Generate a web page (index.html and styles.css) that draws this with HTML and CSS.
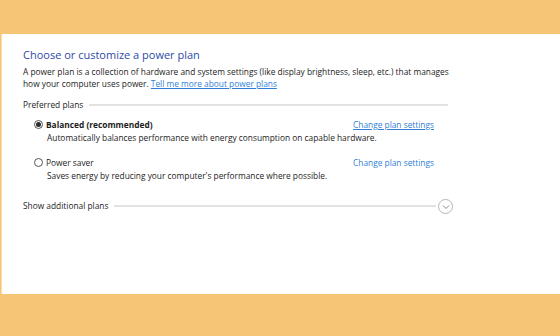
FILE: index.html
```html
<!DOCTYPE html>
<html>
<head>
<meta charset="utf-8">
<link rel="stylesheet" href="styles.css">
</head>
<body>
<div class="panel">
  <h1 class="title">Choose or customize a power plan</h1>
  <p class="intro">A power plan is a collection of hardware and system settings (like display brightness, sleep, etc.) that manages<br>how your computer uses power. <a class="link" href="#">Tell me more about power plans</a></p>

  <div class="group-head">
    <span class="group-label">Preferred plans</span>
    <span class="rule"></span>
  </div>

  <div class="plan first">
    <div class="plan-row">
      <span class="radio checked"></span>
      <span class="plan-name bold">Balanced (recommended)</span>
      <a class="link plan-link" href="#">Change plan settings</a>
    </div>
    <div class="plan-desc">Automatically balances performance with energy consumption on capable hardware.</div>
  </div>

  <div class="plan second">
    <div class="plan-row">
      <span class="radio"></span>
      <span class="plan-name">Power saver</span>
      <a class="link plan-link plain" href="#">Change plan settings</a>
    </div>
    <div class="plan-desc">Saves energy by reducing your computer's performance where possible.</div>
  </div>

  <div class="group-head more">
    <span class="group-label">Show additional plans</span>
    <span class="rule"></span>
    <span class="expander">
      <svg width="8" height="6" viewBox="0 0 8 6"><path d="M1 1.5 L4 4.5 L7 1.5" fill="none" stroke="#8a8a8a" stroke-width="1"/></svg>
    </span>
  </div>
</div>
</body>
</html>
```

FILE: styles.css
```css
html, body {
  margin: 0;
  padding: 0;
}
body {
  background: #f7c576;
  width: 560px;
  height: 336px;
  overflow: hidden;
  font-family: "Open Sans", "Noto Sans", sans-serif;
}
.panel {
  margin-top: 34px;
  margin-left: 1px;
  border-left: 1px solid #fcdcaa;
  height: 260px;
  background: #ffffff;
  padding: 13px 0 0 21px;
  box-sizing: border-box;
}
.title {
  margin: 0;
  font-size: 11px;
  line-height: 16px;
  font-weight: normal;
  color: #2e4aa8;
}
.intro {
  margin: 3px 0 0 0;
  font-size: 8.35px;
  line-height: 11.5px;
  color: #1c1c1c;
}
.link {
  color: #2f7fd6;
  text-decoration: underline;
}
.group-head {
  display: flex;
  align-items: center;
  width: 425px;
  margin-top: 10px;
  height: 12px;
}
.group-label {
  font-size: 8.35px;
  line-height: 12px;
  color: #1c1c1c;
  margin-right: 6px;
  white-space: nowrap;
}
.rule {
  flex: 1;
  height: 1.5px;
  background: #e2e2e2;
}
.plan {
  margin-left: 11px;
  width: 400px;
}
.plan.first { margin-top: 6px; }
.plan.second { margin-top: 10px; }
.plan-row {
  display: flex;
  align-items: center;
  height: 14px;
}
.radio {
  width: 9px;
  height: 9px;
  border: 1px solid #555;
  border-radius: 50%;
  box-sizing: border-box;
  display: flex;
  align-items: center;
  justify-content: center;
  margin-right: 3px;
  background: #fff;
}
.radio.checked::after {
  content: "";
  width: 5px;
  height: 5px;
  border-radius: 50%;
  background: #2a2a2a;
}
.plan-name {
  font-size: 8.35px;
  color: #1c1c1c;
  flex: 1;
}
.bold { font-weight: bold; }
.plan-link {
  font-size: 8.35px;
}
.plan-link.plain { text-decoration: none; }
.plan-desc {
  padding-left: 13px;
  font-size: 8.35px;
  line-height: 14px;
  color: #1c1c1c;
}
.group-head.more {
  margin-top: 17px;
  width: 430px;
}
.expander {
  width: 15px;
  height: 15px;
  border: 1px solid #b5b5b5;
  border-radius: 50%;
  box-sizing: border-box;
  display: flex;
  align-items: center;
  justify-content: center;
  margin-left: 2px;
}
.expander svg { display: block; margin-top: 1px; }
```
